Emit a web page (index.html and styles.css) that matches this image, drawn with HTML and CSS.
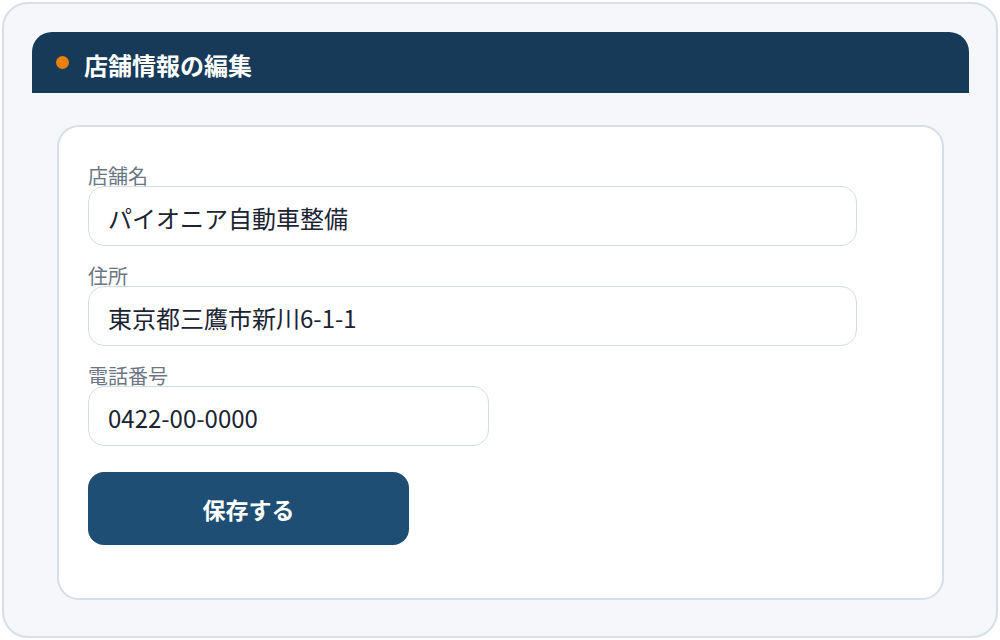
FILE: index.html
```html
<!DOCTYPE html>
<html lang="ja">
<head>
<meta charset="utf-8">
<title>店舗情報の編集</title>
<link rel="stylesheet" href="styles.css">
</head>
<body>
<div class="frame">
  <div class="header">
    <span class="dot"></span>
    <h1 class="title">店舗情報の編集</h1>
  </div>
  <div class="card">
    <div class="field">
      <label class="label">店舗名</label>
      <div class="input wide">パイオニア自動車整備</div>
    </div>
    <div class="field">
      <label class="label">住所</label>
      <div class="input wide">東京都三鷹市新川6-1-1</div>
    </div>
    <div class="field">
      <label class="label">電話番号</label>
      <div class="input narrow">0422-00-0000</div>
    </div>
    <button class="save">保存する</button>
  </div>
</div>
</body>
</html>
```

FILE: styles.css
```css
* { box-sizing: border-box; }
html, body { margin: 0; padding: 0; background: #ffffff; }
body {
  font-family: "Noto Sans CJK JP", "Noto Sans", sans-serif;
  padding: 2px;
}
.frame {
  width: 996px;
  height: 636px;
  border: 2px solid #d6dee7;
  border-radius: 26px;
  background: #f5f7fa;
  padding: 28px 27px 0 28px;
}
.header {
  height: 61px;
  background: #163a57;
  border-radius: 20px 20px 0 0;
  display: flex;
  align-items: center;
  padding-left: 24px;
  gap: 15px;
}
.dot {
  width: 13px;
  height: 13px;
  border-radius: 50%;
  background: #ea800c;
  flex: none;
}
.title {
  margin: 5px 0 0 0;
  color: #ffffff;
  font-size: 24px;
  font-weight: 700;
  line-height: 30px;
}
.card {
  margin: 32px 25px 0 25px;
  background: #ffffff;
  border: 2px solid #d6dee7;
  border-radius: 22px;
  height: 475px;
  padding: 37px 29px 0 29px;
  display: flex;
  flex-direction: column;
  gap: 18px;
}
.field {
  display: flex;
  flex-direction: column;
}
.label {
  font-size: 20px;
  line-height: 22px;
  height: 22px;
  padding-top: 1px;
  color: #6b7684;
}
.input {
  height: 60px;
  border: 1px solid #d3dde7;
  border-radius: 16px;
  background: #ffffff;
  padding: 3px 0 0 19px;
  display: flex;
  align-items: center;
  font-size: 24px;
  color: #1b2432;
}
.wide { width: 769px; }
.narrow { width: 401px; }
.save {
  margin-top: 8px;
  width: 321px;
  height: 73px;
  border: none;
  border-radius: 16px;
  background: #1f4e74;
  color: #ffffff;
  font-family: "Noto Sans CJK JP", "Noto Sans", sans-serif;
  font-size: 23px;
  font-weight: 700;
}
```
